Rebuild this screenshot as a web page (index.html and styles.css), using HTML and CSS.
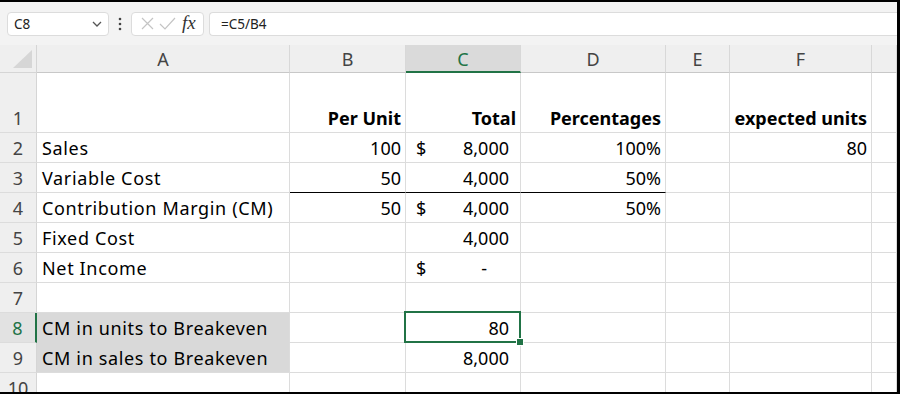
FILE: index.html
```html
<!DOCTYPE html>
<html>
<head>
  <link rel="stylesheet" href="styles.css">
</head>
<body>
  <div class="frame">
    <div class="formula-bar">
      <div class="name-box">
        <span>C8</span>
        <svg class="chevron" width="10" height="6" viewBox="0 0 10 6"><polyline points="1,1 5,5 9,1" fill="none" stroke="#555" stroke-width="1.3"/></svg>
      </div>
      <svg class="dots" width="4" height="14" viewBox="0 0 4 14"><circle cx="2" cy="2" r="1.3" fill="#444"/><circle cx="2" cy="7" r="1.3" fill="#444"/><circle cx="2" cy="12" r="1.3" fill="#444"/></svg>
      <div class="fx-box">
        <svg width="13" height="13" viewBox="0 0 13 13"><path d="M1 1 L12 12 M12 1 L1 12" stroke="#c4c4c4" stroke-width="1.2"/></svg>
        <svg width="17" height="13" viewBox="0 0 17 13"><path d="M1 7 L6 12 L16 1" fill="none" stroke="#c4c4c4" stroke-width="1.2"/></svg>
        <span class="fx">fx</span>
      </div>
      <div class="formula-input">=C5/B4</div>
    </div>

    <div class="sheet">
      <div class="corner"><div class="tri"></div></div>
      <div class="hd">A</div>
      <div class="hd">B</div>
      <div class="hd hd-sel">C</div>
      <div class="hd">D</div>
      <div class="hd">E</div>
      <div class="hd">F</div>
      <div class="hd"></div>

      <div class="rh tall">1</div>
      <div class="c tall"></div>
      <div class="c tall r b">Per Unit</div>
      <div class="c tall r b">Total</div>
      <div class="c tall r b">Percentages</div>
      <div class="c tall"></div>
      <div class="c tall r b">expected units</div>
      <div class="c tall"></div>

      <div class="rh">2</div>
      <div class="c label">Sales</div>
      <div class="c r">100</div>
      <div class="c acct"><span>$</span><span>8,000</span></div>
      <div class="c r">100%</div>
      <div class="c"></div>
      <div class="c r">80</div>
      <div class="c"></div>

      <div class="rh">3</div>
      <div class="c label">Variable Cost</div>
      <div class="c r line">50</div>
      <div class="c acct line"><span></span><span>4,000</span></div>
      <div class="c r line">50%</div>
      <div class="c"></div>
      <div class="c"></div>
      <div class="c"></div>

      <div class="rh">4</div>
      <div class="c label">Contribution Margin (CM)</div>
      <div class="c r">50</div>
      <div class="c acct"><span>$</span><span>4,000</span></div>
      <div class="c r">50%</div>
      <div class="c"></div>
      <div class="c"></div>
      <div class="c"></div>

      <div class="rh">5</div>
      <div class="c label">Fixed Cost</div>
      <div class="c"></div>
      <div class="c acct"><span></span><span>4,000</span></div>
      <div class="c"></div>
      <div class="c"></div>
      <div class="c"></div>
      <div class="c"></div>

      <div class="rh">6</div>
      <div class="c label">Net Income</div>
      <div class="c"></div>
      <div class="c acct"><span>$</span><span class="dash">-</span></div>
      <div class="c"></div>
      <div class="c"></div>
      <div class="c"></div>
      <div class="c"></div>

      <div class="rh">7</div>
      <div class="c"></div>
      <div class="c"></div>
      <div class="c"></div>
      <div class="c"></div>
      <div class="c"></div>
      <div class="c"></div>
      <div class="c"></div>

      <div class="rh rh-sel">8</div>
      <div class="c label fill fill-top">CM in units to Breakeven</div>
      <div class="c"></div>
      <div class="c acct active"><span></span><span>80</span></div>
      <div class="c"></div>
      <div class="c"></div>
      <div class="c"></div>
      <div class="c"></div>

      <div class="rh">9</div>
      <div class="c label fill">CM in sales to Breakeven</div>
      <div class="c"></div>
      <div class="c acct"><span></span><span>8,000</span></div>
      <div class="c"></div>
      <div class="c"></div>
      <div class="c"></div>
      <div class="c"></div>

      <div class="rh">10</div>
      <div class="c"></div>
      <div class="c"></div>
      <div class="c"></div>
      <div class="c"></div>
      <div class="c"></div>
      <div class="c"></div>
      <div class="c"></div>
    </div>
  </div>
</body>
</html>
```

FILE: styles.css
```css
body {
  margin: 0;
  padding: 0;
  background: #fff;
}

.frame {
  width: 900px;
  height: 394px;
  box-sizing: border-box;
  border-top: 2px solid #000;
  border-right: 3px solid #000;
  border-bottom: 2px solid #000;
  background: #f3f3f3;
  overflow: hidden;
}

/* formula bar */
.formula-bar {
  height: 43px;
  display: flex;
  align-items: center;
  padding-left: 7px;
  font-family: "Noto Sans", sans-serif;
  font-size: 13.5px;
  color: #222;
}

.name-box {
  width: 102px;
  height: 24px;
  box-sizing: border-box;
  background: #fff;
  border: 1px solid #dcdcdc;
  border-radius: 4px;
  display: flex;
  align-items: center;
  justify-content: space-between;
  padding: 0 6px 0 6px;
}

.dots {
  margin: 0 9px 0 9px;
}

.fx-box {
  width: 73px;
  height: 24px;
  box-sizing: border-box;
  background: #fff;
  border: 1px solid #dcdcdc;
  border-radius: 4px;
  display: flex;
  align-items: center;
  gap: 5px;
  padding-left: 9px;
}

.fx {
  font-family: "Liberation Serif", serif;
  font-style: italic;
  font-size: 19px;
  color: #333;
  margin-left: 1px;
  line-height: 1;
  padding-bottom: 2px;
}

.formula-input {
  flex: 1;
  height: 24px;
  box-sizing: border-box;
  margin-left: 5px;
  background: #fff;
  border: 1px solid #dcdcdc;
  border-right: none;
  border-radius: 4px 0 0 4px;
  display: flex;
  align-items: center;
  padding-left: 11px;
}

/* sheet grid */
.sheet {
  display: grid;
  grid-template-columns: 37px 253px 116px 115px 145px 64px 142px 1fr;
  grid-template-rows: 28px 60px repeat(9, 30px);
  background: #fff;
}

.corner {
  background: #efefef;
  border-right: 1px solid #d5d5d5;
  border-bottom: 1px solid #d5d5d5;
  position: relative;
}

.corner .tri {
  position: absolute;
  right: 4px;
  bottom: 4px;
  width: 0;
  height: 0;
  border-left: 19px solid transparent;
  border-bottom: 18px solid #d6d6d6;
}

.hd {
  background: #efefef;
  border-right: 1px solid #d8d8d8;
  border-bottom: 1px solid #c8c8c8;
  display: flex;
  align-items: center;
  justify-content: center;
  font-family: "Noto Sans", sans-serif;
  font-size: 18px;
  color: #444;
  padding-top: 1px;
}

.hd-sel {
  background: #dadada;
  color: #217346;
  border-bottom: 2px solid #217346;
}

.rh {
  background: #efefef;
  border-right: 1px solid #d5d5d5;
  border-bottom: 1px solid #dcdcdc;
  display: flex;
  align-items: flex-end;
  justify-content: center;
  padding-bottom: 2px;
  box-sizing: border-box;
  font-family: "Noto Sans", sans-serif;
  font-size: 18px;
  color: #444;
}

.rh-sel {
  background: #e2e2e2;
  color: #217346;
  border-right: 2px solid #217346;
}

.c {
  border-right: 1px solid #dcdcdc;
  border-bottom: 1px solid #dcdcdc;
  display: flex;
  align-items: flex-end;
  padding: 0 4px 2px 5px;
  box-sizing: border-box;
  font-family: "Noto Sans", sans-serif;
  font-size: 18px;
  color: #000;
  white-space: nowrap;
}

.label {
  letter-spacing: 0.65px;
}

.r {
  justify-content: flex-end;
}

.b {
  font-weight: bold;
}

.acct {
  justify-content: space-between;
  padding: 0 11px 2px 10px;
}

.dash {
  margin-right: 22px;
}

.line {
  border-bottom-color: #000;
}

.fill {
  background: #d9d9d9;
}

.fill-top {
  border-bottom-color: #d9d9d9;
}

.active {
  position: relative;
}

.active::after {
  content: "";
  position: absolute;
  left: -2px;
  top: -2px;
  right: -1px;
  bottom: -1px;
  border: 2px solid #217346;
}

.active::before {
  content: "";
  position: absolute;
  right: -4px;
  bottom: -4px;
  width: 6px;
  height: 6px;
  background: #217346;
  border: 1px solid #fff;
  z-index: 1;
}
```
